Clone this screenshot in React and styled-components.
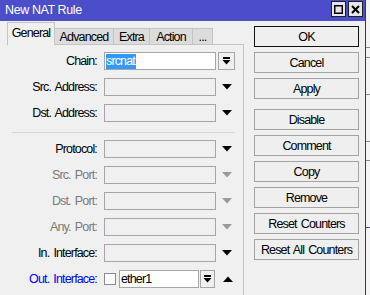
import React from "react";
import styled, { createGlobalStyle } from "styled-components";

const Global = createGlobalStyle`
  html, body {
    margin: 0;
    padding: 0;
    background: #f0f0f0;
  }
  body {
    font-family: "Liberation Sans", Arial, sans-serif;
    font-size: 12.5px;
    letter-spacing: -0.85px;
    word-spacing: 1.5px;
    color: #000;
  }
`;

const Screen = styled.div`
  display: flex;
  width: 370px;
  height: 295px;
  overflow: hidden;
`;

const Backdrop = styled.div`
  flex: 1;
  background:
    linear-gradient(#8a8a8a, #8a8a8a) 0 47px / 100% 1px no-repeat,
    linear-gradient(#8a8a8a, #8a8a8a) 0 57px / 100% 1px no-repeat,
    linear-gradient(#8a8a8a, #8a8a8a) 0 94px / 100% 1px no-repeat,
    linear-gradient(#8a8a8a, #8a8a8a) 0 141px / 100% 1px no-repeat,
    linear-gradient(#8a8a8a, #8a8a8a) 0 160px / 100% 1px no-repeat,
    linear-gradient(#4a4a9a, #4a4a9a) 0 227px / 100% 1px no-repeat,
    #f4f4f4;
`;

const Window = styled.div`
  width: 365px;
  border-right: 1px solid #3a3a3a;
  background: #f0f0f0;
  display: flex;
  flex-direction: column;
`;

const TitleBar = styled.div`
  height: 21px;
  background: #4b4ec8;
  color: #fff;
  display: flex;
  justify-content: space-between;
  padding-left: 5px;
  padding-right: 2px;
`;

const Title = styled.span`
  font-size: 12.5px;
  line-height: 21px;
  letter-spacing: -0.4px;
  word-spacing: 0;
`;

const Controls = styled.div`
  display: flex;
  gap: 2px;
  padding-top: 1px;
`;

const Ctl = styled.div`
  width: 15px;
  height: 16px;
  box-sizing: border-box;
  background: #e6e6e6;
  border: 1px solid #202020;
  display: flex;
  align-items: center;
  justify-content: center;
`;

const Body = styled.div`
  flex: 1;
  display: flex;
`;

const LeftCol = styled.div`
  width: 244px;
  display: flex;
  flex-direction: column;
  padding-top: 1px;
`;

const TabStrip = styled.div`
  margin-left: 7px;
  height: 22px;
  display: flex;
  align-items: flex-end;
  border-bottom: 1px solid #c4c4c4;
`;

const Tab = styled.div`
  position: relative;
  box-sizing: border-box;
  width: ${(p) => p.$w}px;
  height: ${(p) => (p.$active ? 23 : 16)}px;
  margin-bottom: ${(p) => (p.$active ? -1 : 0)}px;
  border: 1px solid #c4c4c4;
  border-bottom: none;
  margin-right: -1px;
  background: ${(p) => (p.$active ? "#f0f0f0" : "#dcdcdc")};
  z-index: ${(p) => (p.$active ? 2 : 1)};
  display: flex;
  align-items: ${(p) => (p.$active ? "flex-start" : "center")};
  padding-top: ${(p) => (p.$active ? 3 : 0)}px;
  justify-content: center;
`;

const Pane = styled.div`
  flex: 1;
  border-right: 1px solid #c4c4c4;
  padding-top: 7px;
`;

const Section = styled.div`
  display: flex;
  flex-direction: column;
  gap: 8px;
`;

const Separator = styled.div`
  height: 1px;
  background: #d6d6d6;
  margin: 10px 8px 7px 12px;
`;

const Row = styled.div`
  display: flex;
  align-items: center;
  height: 18px;
`;

const Label = styled.div`
  width: 97px;
  padding-right: 7px;
  text-align: right;
  color: ${(p) => p.$color || "#000"};
`;

const Input = styled.div`
  box-sizing: border-box;
  width: ${(p) => p.$w || 112}px;
  height: 18px;
  border: 1px solid #a6a6a6;
  background: ${(p) => (p.$filled ? "#fff" : "#f0f0f0")};
  display: flex;
  align-items: center;
  padding-left: 1px;
`;

const Selected = styled.span`
  background: #3399ff;
  color: #fff;
  line-height: 15px;
  padding-right: 1px;
`;

const DropBtn = styled.div`
  box-sizing: border-box;
  width: ${(p) => p.$w || 17}px;
  height: 18px;
  margin-left: ${(p) => p.$ml ?? 2}px;
  border: 1px solid #a6a6a6;
  background: #f0f0f0;
  display: flex;
  align-items: center;
  justify-content: center;
`;

const ArrowSlot = styled.div`
  width: 18px;
  margin-left: ${(p) => p.$ml ?? 2}px;
  display: flex;
  justify-content: center;
  align-items: center;
`;

const Check = styled.div`
  box-sizing: border-box;
  width: 12px;
  height: 12px;
  border: 1px solid #8c8c8c;
  background: #fff;
  margin-right: 3px;
`;

const ButtonCol = styled.div`
  width: 105px;
  margin-left: 10px;
  padding-top: 5px;
  display: flex;
  flex-direction: column;
  gap: 5px;
`;

const Button = styled.div`
  box-sizing: border-box;
  height: 21px;
  border: 1px solid ${(p) => (p.$default ? "#111" : "#a3a3a3")};
  background: #efefef;
  display: flex;
  align-items: center;
  justify-content: center;
  margin-top: ${(p) => (p.$spaced ? 5 : 0)}px;
`;

const DropIcon = () => (
  <svg width="9" height="8" viewBox="0 0 9 8">
    <rect x="1" y="0" width="7" height="2" fill="#000" />
    <path d="M0.5 3 H8.5 L4.5 7.5 Z" fill="#000" />
  </svg>
);

const Arrow = ({ up, color = "#000" }) => (
  <svg width="10" height="6" viewBox="0 0 10 6">
    <path d={up ? "M0 6 H10 L5 0.5 Z" : "M0 0 H10 L5 5.5 Z"} fill={color} />
  </svg>
);

const fields1 = ["Src. Address:", "Dst. Address:"];
const fields2 = [
  { label: "Protocol:", color: "#000", arrow: "#000" },
  { label: "Src. Port:", color: "#7a7a7a", arrow: "#9a9a9a" },
  { label: "Dst. Port:", color: "#7a7a7a", arrow: "#9a9a9a" },
  { label: "Any. Port:", color: "#7a7a7a", arrow: "#9a9a9a" },
  { label: "In. Interface:", color: "#000", arrow: "#000" },
];

const tabs = [
  { name: "General", w: 48 },
  { name: "Advanced", w: 60 },
  { name: "Extra", w: 37 },
  { name: "Action", w: 44 },
  { name: "...", w: 21 },
];

const buttons = [
  "OK",
  "Cancel",
  "Apply",
  "Disable",
  "Comment",
  "Copy",
  "Remove",
  "Reset Counters",
  "Reset All Counters",
];

const App = () => {
  return (
    <Screen>
      <Global />
      <Window>
        <TitleBar>
          <Title>New NAT Rule</Title>
          <Controls>
            <Ctl>
              <svg width="9" height="9" viewBox="0 0 9 9">
                <rect x="0.75" y="0.75" width="7.5" height="7.5" fill="none" stroke="#000" strokeWidth="1.5" />
              </svg>
            </Ctl>
            <Ctl>
              <svg width="9" height="9" viewBox="0 0 9 9">
                <path d="M1 1 L8 8 M8 1 L1 8" stroke="#000" strokeWidth="2" />
              </svg>
            </Ctl>
          </Controls>
        </TitleBar>
        <Body>
          <LeftCol>
            <TabStrip>
              {tabs.map((t, i) => (
                <Tab key={t.name} $w={t.w} $active={i === 0}>
                  {t.name}
                </Tab>
              ))}
            </TabStrip>
            <Pane>
              <Section>
                <Row>
                  <Label>Chain:</Label>
                  <Input $filled>
                    <Selected>srcnat</Selected>
                  </Input>
                  <DropBtn>
                    <DropIcon />
                  </DropBtn>
                </Row>
                {fields1.map((f) => (
                  <Row key={f}>
                    <Label>{f}</Label>
                    <Input />
                    <ArrowSlot>
                      <Arrow />
                    </ArrowSlot>
                  </Row>
                ))}
              </Section>
              <Separator />
              <Section>
                {fields2.map((f) => (
                  <Row key={f.label}>
                    <Label $color={f.color}>{f.label}</Label>
                    <Input />
                    <ArrowSlot>
                      <Arrow color={f.arrow} />
                    </ArrowSlot>
                  </Row>
                ))}
                <Row>
                  <Label $color="#0000ff">Out. Interface:</Label>
                  <Check />
                  <Input $filled $w={80}>
                    ether1
                  </Input>
                  <DropBtn $w={15} $ml={1}>
                    <DropIcon />
                  </DropBtn>
                  <ArrowSlot $ml={4}>
                    <Arrow up />
                  </ArrowSlot>
                </Row>
              </Section>
            </Pane>
          </LeftCol>
          <ButtonCol>
            {buttons.map((b, i) => (
              <Button key={b} $default={i === 0} $spaced={b === "Disable"}>
                {b}
              </Button>
            ))}
          </ButtonCol>
        </Body>
      </Window>
      <Backdrop />
    </Screen>
  );
};

export default App;
